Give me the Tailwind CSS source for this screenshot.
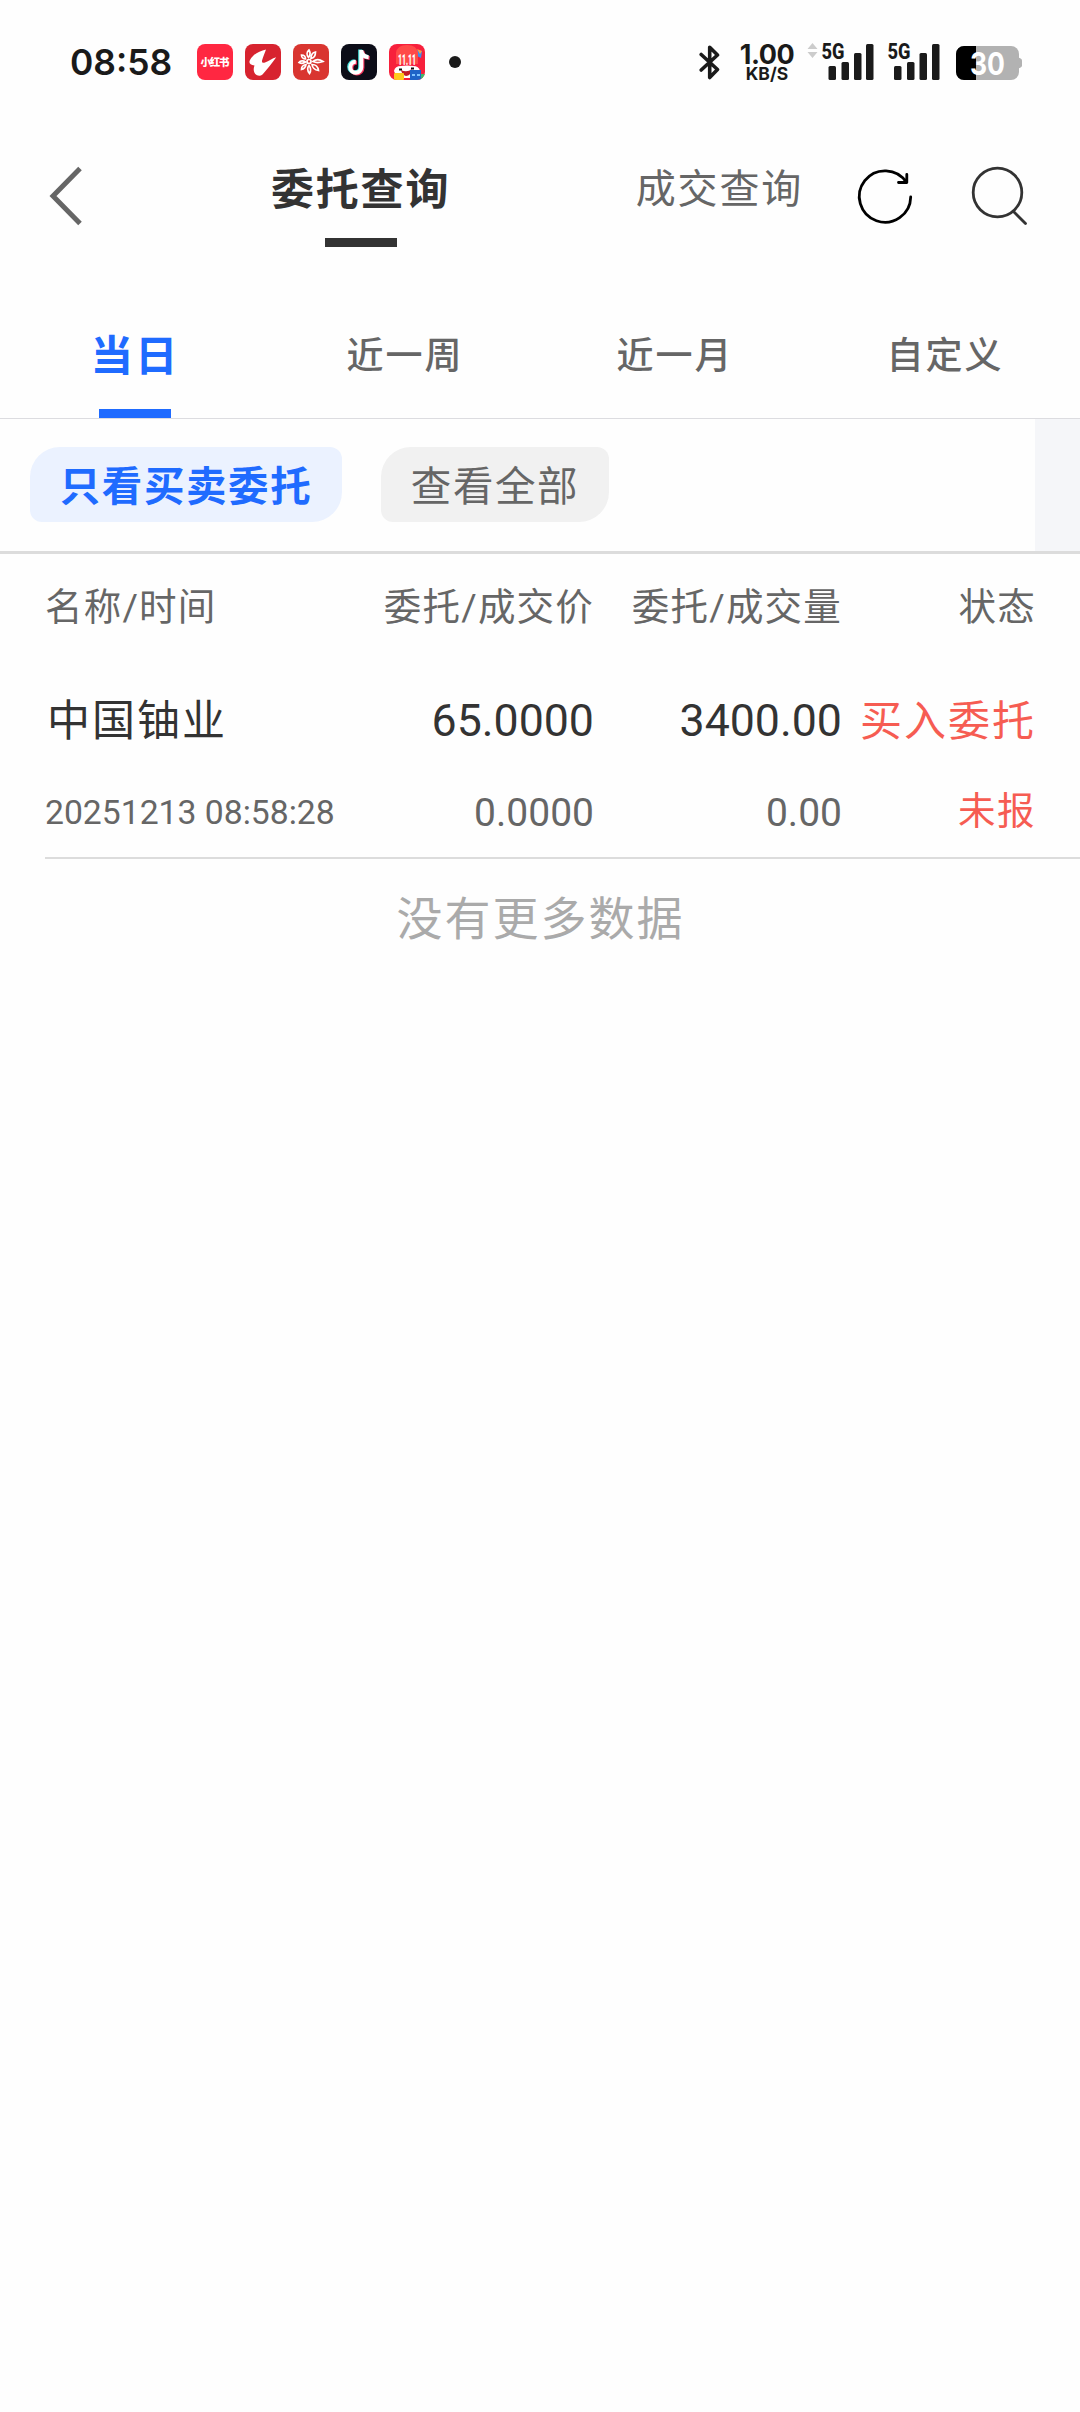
<!DOCTYPE html>
<html lang="zh-CN">
<head>
<meta charset="utf-8">
<meta name="viewport" content="width=1080">
<title>委托查询</title>
<script src="https://cdn.jsdelivr.net/npm/@tailwindcss/browser@4"></script>
</head>
<body class="w-[1080px] h-[2412px] overflow-hidden bg-[#fefefe] font-[Roboto,'Noto_Sans_CJK_SC',sans-serif] text-[#666] whitespace-nowrap">
<div class="flex flex-col h-full">

  <!-- status bar -->
  <div class="h-[124px] flex items-center pl-[70px] pr-[57px] text-[#1a1a1a] font-[Inter,sans-serif]">
    <span class="text-[35.4px] leading-[40px] font-semibold w-[127px] pt-px">08:58</span>
    <div class="flex gap-3 items-center">
      <svg class="size-9" viewBox="0 0 36 36"><rect width="36" height="36" rx="8" fill="#ff2741"/><text x="18" y="22.2" font-size="10.5" font-weight="900" text-anchor="middle" fill="#fff" textLength="29" font-family="Noto Sans CJK SC, sans-serif">小红书</text></svg>
      <svg class="size-9" viewBox="0 0 36 36"><rect width="36" height="36" rx="8" fill="#d7232f"/><path fill="#fff" d="M21 5.500C14 7 8 10.500 5 16c-1.500 3 0 5 4.500 5.500C8 25 8.500 29.500 12 31.200c2 .8 4 .5 5.500-.8C22 25.500 27 19 31.200 13.200c-4 1-7.200 3.600-11.200 5.300-2.500.8-3.500-.5-2.800-2.500C18 13 19.500 9.500 21 5.500Z"/></svg>
      <svg class="size-9" viewBox="0 0 36 36"><rect width="36" height="36" rx="8" fill="#d93530"/><g fill="none" stroke="#fff" stroke-width="1.700"><circle cx="16" cy="17.500" r="2"/><path d="M15.500 13.500c-2-2.500-2-5.500.5-7.500 1.500 2.500 1.500 5-.5 7.500ZM18 14.500c0-3.500 1.500-6 4.500-6.500 0 3.500-1.500 6-4.500 6.500ZM20 17.500c3-2.500 7-2 10 0-4 1.500-7 1.500-10 0ZM19 20.500c3.500 0 6 2.500 6.500 6-3.500-.5-6-2.500-6.500-6ZM16 21.500c2 2.500 2 5.500.5 8-2-2.500-2.500-5.500-.5-8ZM13 20.500c-.5 2.500-2 4.500-4.500 5 0-2.500 1.500-4.500 4.500-5ZM12.500 18c-2 1.500-4.500 1.500-6.500.5 1.500-2 4.500-2 6.500-.5ZM12.500 15c-2 0-4-1.500-4-4 2.500 0 4 1.500 4 4Z"/></g></svg>
      <svg class="size-9" viewBox="0 0 36 36"><rect width="36" height="36" rx="8" fill="#0c0d18"/><g fill="none" stroke-width="4"><path stroke="#4de8e4" d="M19.200 5.500v17.300a5.500 5.500 0 1 1-5.500-5.500M19.200 6c.5 4 3.300 6.500 7.300 6.800"/><path stroke="#f7345c" d="M21.400 6.700V24a5.500 5.500 0 1 1-5.500-5.500M21.400 7.200c.5 4 3.300 6.500 7.300 6.800"/><path stroke="#fff" d="M20.300 6v17.300a5.500 5.500 0 1 1-5.500-5.500M20.300 6.500c.5 4 3.300 6.500 7.300 6.800"/></g></svg>
      <svg class="size-9" viewBox="0 0 36 36"><defs><clipPath id="r"><rect width="36" height="36" rx="8"/></clipPath></defs><g clip-path="url(#r)"><rect width="36" height="36" fill="#f7203c"/><path fill="#3f8de8" d="M28 6l5 1-1 7-4-2Z"/><path fill="#ff9c3a" d="M28 5l5 2-2 3Z"/><path fill="#ff4a48" d="M7 20V9Q8 1 18 1t11 8v11Z"/><path fill="#fff" d="M5 27q1-5 7-5 6-1 12 0 6 0 7 5l-3 7H8Z"/><path fill="#111" d="M10 24.500h3v2h-3ZM22 23.500h3v2h-3Z"/><path fill="#c31b27" d="M12 26q6 3 11-1-1 7-6 7-4-1-5-6Z"/><rect x="5" y="29" width="10" height="7" rx="1" fill="#ffc91f"/><path fill="#1e64c8" d="M21 26h11v10H21Z"/><path fill="#7fc4ff" d="M23 30h3v2h-3ZM28 30h3v2h-3Z"/><path fill="#40b86a" d="M32 30h4v6h-4Z"/></g><text x="18" y="20.500" font-size="14" font-weight="900" text-anchor="middle" fill="#fff" textLength="18" lengthAdjust="spacingAndGlyphs" font-family="Roboto, sans-serif">11.11</text></svg>
    </div>
    <span class="size-3 rounded-full bg-[#1a1a1a] ml-6"></span>
    <div class="flex items-center ml-auto">
      <svg class="w-[22px] h-[37px]" viewBox="0 0 22 37" fill="none" stroke="#1a1a1a" stroke-width="3.600" stroke-linejoin="round" stroke-linecap="round"><path d="M2.200 10.500 18.500 25.500 10.700 33.500V3.200L18.500 11 2.200 26"/></svg>
      <div class="flex flex-col items-center w-[60px] ml-[16px] mr-[9px] font-bold">
        <span class="text-[27px] leading-[23px] tracking-[-0.4px]">1.00</span>
        <span class="text-[17.5px] leading-[16px] font-bold">KB/S</span>
      </div>
      <svg class="w-[68px] h-[38px] overflow-visible" viewBox="0 0 68 38"><path fill="#ccc" d="M6.500 0 11.500 6h-10ZM6.500 15 11.500 9h-10Z"/><text x="15.500" y="16" font-size="21.500" font-weight="800" fill="#1a1a1a" textLength="23" lengthAdjust="spacingAndGlyphs" font-family="Roboto, sans-serif">5G</text><g fill="#1a1a1a"><rect x="22.500" y="23" width="7.500" height="14" rx="1.500"/><rect x="35.500" y="19" width="7.500" height="18" rx="1.500"/><rect x="48" y="10" width="7.500" height="27" rx="1.500"/><rect x="60" y="1" width="7.500" height="36" rx="1.500"/></g></svg>
      <svg class="w-[54px] h-[38px] ml-3 overflow-visible" viewBox="0 0 54 38"><text x="1.500" y="16" font-size="21.500" font-weight="800" fill="#1a1a1a" textLength="23" lengthAdjust="spacingAndGlyphs" font-family="Roboto, sans-serif">5G</text><g fill="#1a1a1a"><rect x="8" y="23" width="7.500" height="14" rx="1.500"/><rect x="21" y="19" width="7.500" height="18" rx="1.500"/><rect x="33.500" y="10" width="7.500" height="27" rx="1.500"/><rect x="46" y="1" width="7.500" height="36" rx="1.500"/></g></svg>
      <svg class="w-[67px] h-[34px] ml-4 mt-[2px]" viewBox="0 0 67 34"><defs><clipPath id="b"><rect width="63" height="34" rx="8"/></clipPath></defs><path fill="#b2b2b2" d="M62 11.500q4 1 4 3v5q0 2-4 3Z"/><g clip-path="url(#b)"><rect width="67" height="34" fill="#b2b2b2"/><rect width="20" height="34" fill="#000"/></g><text x="31.500" y="28.500" font-size="31" font-weight="700" text-anchor="middle" fill="#fff" textLength="35" lengthAdjust="spacingAndGlyphs" font-family="Inter, sans-serif">30</text></svg>
    </div>
  </div>

  <!-- title bar -->
  <div class="h-[170px] flex items-start pl-[48px] pr-[50px] pt-[36px]">
    <svg class="w-[36px] h-[72px]" viewBox="0 0 36 72" fill="none" stroke="#666" stroke-width="5"><path d="M32 8.500 5 36 32 63.500"/></svg>
    <div class="flex flex-col items-center ml-[187px]">
      <span class="text-[43px] leading-[61px] font-bold tracking-[1.800px] text-[#333]">委托查询</span>
      <span class="w-[72px] h-[9px] mt-[17px] bg-[#333]"></span>
    </div>
    <span class="ml-auto text-[40px] leading-[60px] tracking-[1.800px]">成交查询</span>
    <svg class="w-[60px] h-[72px] ml-[51px]" viewBox="0 0 60 72" fill="none" stroke="#000" stroke-width="2.800" stroke-linecap="round" stroke-linejoin="round"><path d="M56.700 37A25.700 25.700 0 1 1 52.500 22.500M44.500 22.500H52.800V14.500"/></svg>
    <svg class="w-[60px] h-[72px] ml-[56px]" viewBox="0 0 60 72" fill="none" stroke="#333" stroke-width="2.800" stroke-linecap="round"><circle cx="27.500" cy="32.500" r="24.300"/><path d="m43.500 51.500 12 12"/></svg>
  </div>

  <!-- period tabs -->
  <div class="h-[125px] grid grid-cols-4 border-b border-[#dcdce0] text-[37px] leading-[59px] tracking-[2px] font-medium text-center">
    <div class="flex flex-col items-center justify-between pt-[33px] text-[#1f6bff]"><span class="text-[42.5px] font-bold">当日</span><span class="w-[72px] h-[9px] bg-[#1f6bff]"></span></div>
    <span class="pt-[33px]">近一周</span>
    <span class="pt-[33px]">近一月</span>
    <span class="pt-[33px]">自定义</span>
  </div>

  <!-- filters -->
  <div class="h-[135px] flex border-b-[3px] border-[#dcdcdc]">
    <div class="flex-1 flex items-start gap-[39px] pl-[30px] pt-[28px] text-[40.500px] leading-[80px] tracking-[1.600px]">
      <span class="w-[312px] h-[75px] text-center rounded-tl-[30px] rounded-br-[30px] rounded-tr-[12px] rounded-bl-[12px] bg-[#ebf2ff] text-[#1f6bff] font-bold">只看买卖委托</span>
      <span class="w-[228px] h-[75px] text-center rounded-tl-[30px] rounded-br-[30px] rounded-tr-[12px] rounded-bl-[12px] bg-[#f1f1f1]">查看全部</span>
    </div>
    <div class="w-[45px] bg-[#f5f6f9]"></div>
  </div>

  <!-- orders -->
  <div class="h-[96px] pt-[26px] pl-[45px] pr-[44px] grid grid-cols-[301px_248px_248px_194px] text-right text-[37.500px] leading-[54px] tracking-[1.200px]">
    <span class="text-left">名称/时间</span><span>委托/成交价</span><span>委托/成交量</span><span>状态</span>
  </div>
  <div class="h-[209px] ml-[45px] pr-[44px] border-b-2 border-[#dcdcdc] text-right">
    <div class="pt-[38px] grid grid-cols-[301px_248px_248px_194px] text-[44.700px] leading-[67px] text-[#333]">
      <span class="text-left text-[43px] tracking-[2px] pl-[2px]">中国铀业</span><span>65.0000</span><span>3400.00</span><span class="text-[42px] tracking-[2px] text-[#f65c52] ml-[-20px]">买入委托</span>
    </div>
    <div class="mt-[33px] grid grid-cols-[301px_248px_248px_194px] text-[39px] leading-[50px]">
      <span class="text-left text-[33.700px]">20251213 08:58:28</span><span>0.0000</span><span>0.00</span><span class="text-[37.500px] tracking-[1.500px] leading-[46px] text-[#f65c52]">未报</span>
    </div>
  </div>
  <div class="pt-[26px] pl-[1px] text-center text-[46px] leading-[68px] tracking-[2px] text-[#aaa]">没有更多数据</div>
</div>
</body>
</html>
